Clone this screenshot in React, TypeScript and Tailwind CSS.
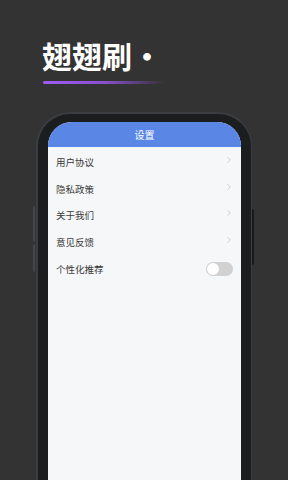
import React from 'react';
import { ChevronRight } from 'lucide-react';

const rows = ['用户协议', '隐私政策', '关于我们', '意见反馈'];

const App: React.FC = () => {
  return (
    <div
      className="w-[288px] h-[480px] overflow-hidden bg-[#333333] flex flex-col"
      style={{ fontFamily: '"Noto Sans CJK SC", "Noto Sans", sans-serif' }}
    >
      <div className="pl-[42px] pt-[38px]">
        <h1 className="text-[30px] leading-[34px] font-bold text-white">翅翅刷·</h1>
        <div className="mt-[9px] ml-[1px] w-[122px] h-[3px] rounded-full bg-gradient-to-r from-[#a259f5] via-[#8a4fcf] to-transparent" />
      </div>

      <div className="relative mt-[28px] ml-[36px] w-[216px] flex-1">
        {/* side buttons */}
        <div className="absolute left-[-3px] top-[94px] w-[2px] h-[36px] rounded-l bg-[#45484b]" />
        <div className="absolute left-[-3px] top-[132px] w-[2px] h-[28px] rounded-l bg-[#45484b]" />
        <div className="absolute right-[-2px] top-[97px] w-[2px] h-[56px] rounded-r bg-[#1a1a1a]" />

        <div className="h-full rounded-t-[34px] bg-[#1c1d1f] border-l-[2px] border-t-[2px] border-r-[1px] border-[#3a3d41] pl-[10px] pr-[10px] pt-[8px]">
          <div className="h-full rounded-t-[24px] bg-[#f6f7f9] overflow-hidden flex flex-col">
            <div className="h-[25px] bg-[#5a87e6] flex items-center justify-center text-white text-[10px]">
              设置
            </div>
            <div className="flex flex-col pt-[2px]">
              {rows.map((r) => (
                <div key={r} className="h-[26.5px] flex items-center justify-between pl-[8px] pr-[7px]">
                  <span className="text-[9.5px] text-[#3a3a3a]">{r}</span>
                  <ChevronRight className="w-[10px] h-[10px] text-[#b8b8b8] -mt-[4px]" strokeWidth={1.5} />
                </div>
              ))}
              <div className="h-[28px] flex items-center justify-between pl-[8px] pr-[8px]">
                <span className="text-[9.5px] text-[#3a3a3a]">个性化推荐</span>
                <div className="w-[27px] h-[14px] rounded-full bg-[#d1d1d1] flex items-center pl-[1px]">
                  <div className="w-[12px] h-[12px] rounded-full bg-white" />
                </div>
              </div>
            </div>
          </div>
        </div>
      </div>
    </div>
  );
};

export default App;
